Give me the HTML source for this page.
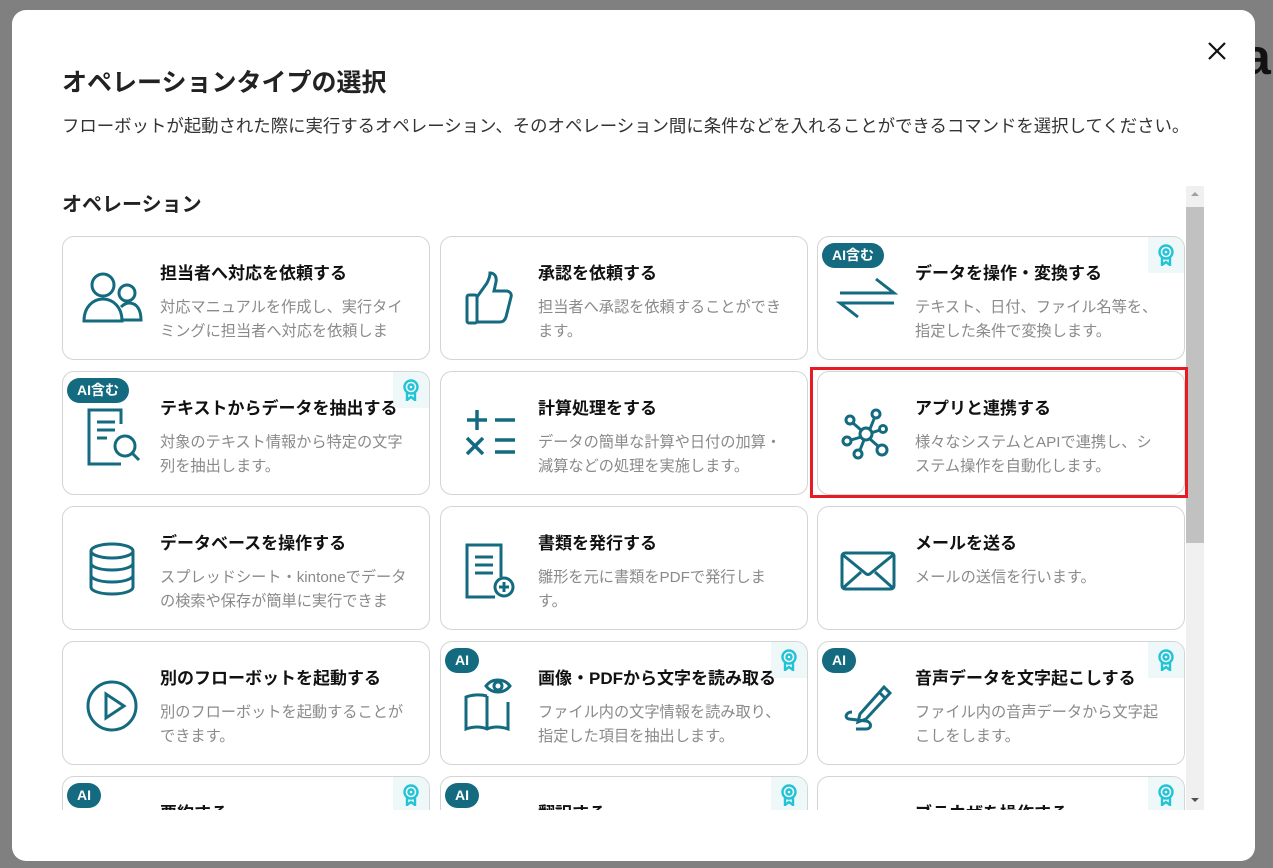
<!DOCTYPE html>
<html><head><meta charset="utf-8">
<style>
*{margin:0;padding:0;box-sizing:border-box}
body{width:1273px;height:868px;background:#808080;position:relative;overflow:hidden;font-family:"Liberation Sans","Noto Sans CJK JP",sans-serif}
.bgwrap{position:absolute;left:1255px;top:0;width:18px;height:868px;overflow:hidden}
.bgA{position:absolute;left:-12px;top:28px;font-size:50px;color:#111;font-weight:bold}
.modal{position:absolute;left:12px;top:10px;width:1243px;height:851px;background:#fff;border-radius:14px}
.x{position:absolute;left:1206px;top:40px}
h1{position:absolute;left:62px;top:63px;font-size:25px;font-weight:bold;color:#222}
.sub{position:absolute;left:62px;top:113px;font-size:17.4px;color:#333;white-space:nowrap}
h2{position:absolute;left:62px;top:188px;font-size:20px;font-weight:bold;color:#222}
.scroll{position:absolute;left:62px;top:186px;width:1143px;height:624px;overflow:hidden}
.sb{position:absolute;left:1186px;top:186px;width:18px;height:624px;background:#f0f0f0}
.thumb{position:absolute;left:1186px;top:207px;width:18px;height:336px;background:#c1c1c1}
.card{position:absolute;width:368px;height:124px;border:1px solid #d4d4d4;border-radius:12px;background:#fff;overflow:hidden}
.card .t{position:absolute;left:97px;top:22px;font-size:17px;font-weight:bold;color:#111;white-space:nowrap}
.card .d{position:absolute;left:97px;top:59px;width:250px;font-size:15.2px;line-height:24px;color:#8a8a8a;height:48px;overflow:hidden}
.card svg.ic{position:absolute;left:18px;top:32px}
.badge{position:absolute;left:4px;top:6px;height:25px;border-radius:13px;background:#146b80;color:#fff;font-size:14px;font-weight:bold;padding:0 10px;line-height:25px;white-space:nowrap}
.aw{position:absolute;right:0;top:0;width:36px;height:36px;background:#eef8f9;border-top-right-radius:12px}
.red{position:absolute;left:810px;top:367px;width:378px;height:131px;border:3px solid #e61b24}
</style></head><body>
<div class="bgwrap"><div class="bgA">a</div></div>
<div class="modal"></div>
<svg class="x" width="22" height="22" viewBox="0 0 22 22"><path d="M3 3L19 19M19 3L3 19" stroke="#111" stroke-width="2.2"/></svg>
<h1>オペレーションタイプの選択</h1>
<div class="sub">フローボットが起動された際に実行するオペレーション、そのオペレーション間に条件などを入れることができるコマンドを選択してください。</div>
<h2>オペレーション</h2>
<div class="sb"></div><div class="thumb"></div>
<svg style="position:absolute;left:1190px;top:190px" width="10" height="8"><path d="M1 6L5 2L9 6Z" fill="#a0a0a0"/></svg>
<svg style="position:absolute;left:1190px;top:796px" width="10" height="8"><path d="M1 2L5 6L9 2Z" fill="#505050"/></svg>

<div class="scroll">
<div class="card" style="left:0;top:50px"><svg class="ic" width="62" height="60" viewBox="0 0 62 60" fill="none" stroke="#146b80" stroke-width="3"><circle cx="22" cy="16" r="11"/><path d="M3 52c0-14 9-22 19-22s19 8 19 22z"/><circle cx="46" cy="24" r="8"/><path d="M40 38c3-3 5-4 8-4 8 0 12 7 12 17H42"/></svg><div class="t">担当者へ対応を依頼する</div><div class="d">対応マニュアルを作成し、実行タイミングに担当者へ対応を依頼しま</div></div>
<div class="card" style="left:378px;top:50px"><svg class="ic" width="62" height="60" viewBox="0 0 62 60" fill="none" stroke="#146b80" stroke-width="3"><rect x="8" y="26" width="10" height="28" rx="2"/><path d="M18 28l10-14c2-4 3-7 3-10 4 0 7 3 6 9l-2 9h12c4 0 6 3 5 6l-5 20c-1 3-3 5-6 5H18"/></svg><div class="t">承認を依頼する</div><div class="d">担当者へ承認を依頼することができます。</div></div>
<div class="card" style="left:755px;top:50px"><div class="badge">AI含む</div><div class="aw"></div><svg style="position:absolute;right:9px;top:7px" width="18" height="22" viewBox="0 0 18 22" fill="none" stroke="#22c3d6" stroke-width="2.4"><circle cx="9" cy="8" r="6.5"/><circle cx="9" cy="8" r="2.5"/><path d="M5 14v7l4-3 4 3v-7"/></svg><svg class="ic" width="62" height="60" viewBox="0 0 62 60" fill="none" stroke="#146b80" stroke-width="3"><path d="M4 24H58L40 10M58 34H4L22 48"/></svg><div class="t">データを操作・変換する</div><div class="d">テキスト、日付、ファイル名等を、指定した条件で変換します。</div></div>
<div class="card" style="left:0;top:185px"><div class="badge">AI含む</div><div class="aw"></div><svg style="position:absolute;right:9px;top:7px" width="18" height="22" viewBox="0 0 18 22" fill="none" stroke="#22c3d6" stroke-width="2.4"><circle cx="9" cy="8" r="6.5"/><circle cx="9" cy="8" r="2.5"/><path d="M5 14v7l4-3 4 3v-7"/></svg><svg class="ic" width="62" height="64" viewBox="0 0 62 64" fill="none" stroke="#146b80" stroke-width="3"><path d="M40 20V6H8v54h32"/><path d="M16 18h18M16 26h18M16 34h10"/><circle cx="44" cy="42" r="10"/><path d="M51 49l7 7"/></svg><div class="t">テキストからデータを抽出する</div><div class="d">対象のテキスト情報から特定の文字列を抽出します。</div></div>
<div class="card" style="left:378px;top:185px"><svg class="ic" width="62" height="60" viewBox="0 0 62 60" fill="none" stroke="#146b80" stroke-width="3.5"><path d="M8 16h20M18 6v20M36 16h20M8 34l16 16M24 34L8 50M36 36h20M36 48h20"/></svg><div class="t">計算処理をする</div><div class="d">データの簡単な計算や日付の加算・減算などの処理を実施します。</div></div>
<div class="card" style="left:755px;top:185px"><svg class="ic" width="62" height="60" viewBox="0 0 62 60" fill="none" stroke="#146b80" stroke-width="3"><circle cx="30" cy="30" r="6"/><path d="M34 25l4-10M25 26l-8-7M25 33l-10 3M34 35l9 8M35 29l9-3M28 36l-4 10"/><circle cx="40" cy="10" r="4"/><circle cx="14" cy="16" r="4"/><circle cx="11" cy="37" r="4"/><circle cx="46" cy="46" r="5"/><circle cx="47" cy="25" r="3.5"/><circle cx="22" cy="50" r="4"/></svg><div class="t">アプリと連携する</div><div class="d">様々なシステムとAPIで連携し、システム操作を自動化します。</div></div>
<div class="card" style="left:0;top:320px"><svg class="ic" width="62" height="60" viewBox="0 0 62 60" fill="none" stroke="#146b80" stroke-width="3"><ellipse cx="31" cy="12" rx="21" ry="7"/><path d="M10 12v36c0 4 9 7 21 7s21-3 21-7V12M10 24c0 4 9 7 21 7s21-3 21-7M10 36c0 4 9 7 21 7s21-3 21-7"/></svg><div class="t">データベースを操作する</div><div class="d">スプレッドシート・kintoneでデータの検索や保存が簡単に実行できま</div></div>
<div class="card" style="left:378px;top:320px"><svg class="ic" width="62" height="62" viewBox="0 0 62 62" fill="none" stroke="#146b80" stroke-width="3"><path d="M42 38V6H8v52h28"/><path d="M16 18h18M16 26h18M16 34h18"/><circle cx="45" cy="48" r="9"/><path d="M45 43v10M40 48h10"/></svg><div class="t">書類を発行する</div><div class="d">雛形を元に書類をPDFで発行します。</div></div>
<div class="card" style="left:755px;top:320px"><svg class="ic" width="62" height="60" viewBox="0 0 62 60" fill="none" stroke="#146b80" stroke-width="3"><rect x="6" y="14" width="52" height="36" rx="3"/><path d="M7 16l22 18c2 2 4 2 6 0l22-18M7 49l18-16M57 49L39 33"/></svg><div class="t">メールを送る</div><div class="d">メールの送信を行います。</div></div>
<div class="card" style="left:0;top:455px"><svg class="ic" width="62" height="60" viewBox="0 0 62 60" fill="none" stroke="#146b80" stroke-width="3"><circle cx="31" cy="32" r="24"/><path d="M25 20v24l18-12z"/></svg><div class="t">別のフローボットを起動する</div><div class="d">別のフローボットを起動することができます。</div></div>
<div class="card" style="left:378px;top:455px"><div class="badge">AI</div><div class="aw"></div><svg style="position:absolute;right:9px;top:7px" width="18" height="22" viewBox="0 0 18 22" fill="none" stroke="#22c3d6" stroke-width="2.4"><circle cx="9" cy="8" r="6.5"/><circle cx="9" cy="8" r="2.5"/><path d="M5 14v7l4-3 4 3v-7"/></svg><svg class="ic" width="62" height="60" viewBox="0 0 62 60" fill="none" stroke="#146b80" stroke-width="3"><path d="M28 22c-8-2-16-1-21 1v32c6-2 14-3 21 0 7-3 15-2 21 0V28"/><path d="M28 22v33"/><path d="M27 12c6-8 18-8 24 0-6 8-18 8-24 0z"/><circle cx="39" cy="12" r="4"/></svg><div class="t">画像・PDFから文字を読み取る</div><div class="d">ファイル内の文字情報を読み取り、指定した項目を抽出します。</div></div>
<div class="card" style="left:755px;top:455px"><div class="badge">AI</div><div class="aw"></div><svg style="position:absolute;right:9px;top:7px" width="18" height="22" viewBox="0 0 18 22" fill="none" stroke="#22c3d6" stroke-width="2.4"><circle cx="9" cy="8" r="6.5"/><circle cx="9" cy="8" r="2.5"/><path d="M5 14v7l4-3 4 3v-7"/></svg><svg class="ic" width="62" height="60" viewBox="0 0 62 60" fill="none" stroke="#146b80" stroke-width="3"><path d="M24 40l-2 8 8-3 24-26-6-6z"/><path d="M44 19l6 6"/><path d="M16 38c-6 0-8 6-3 7l17 2c6 1 6 8 0 8h-10"/></svg><div class="t">音声データを文字起こしする</div><div class="d">ファイル内の音声データから文字起こしをします。</div></div>
<div class="card" style="left:0;top:590px"><div class="badge">AI</div><div class="aw"></div><svg style="position:absolute;right:9px;top:7px" width="18" height="22" viewBox="0 0 18 22" fill="none" stroke="#22c3d6" stroke-width="2.4"><circle cx="9" cy="8" r="6.5"/><circle cx="9" cy="8" r="2.5"/><path d="M5 14v7l4-3 4 3v-7"/></svg><div class="t">要約する</div></div>
<div class="card" style="left:378px;top:590px"><div class="badge">AI</div><div class="aw"></div><svg style="position:absolute;right:9px;top:7px" width="18" height="22" viewBox="0 0 18 22" fill="none" stroke="#22c3d6" stroke-width="2.4"><circle cx="9" cy="8" r="6.5"/><circle cx="9" cy="8" r="2.5"/><path d="M5 14v7l4-3 4 3v-7"/></svg><div class="t">翻訳する</div></div>
<div class="card" style="left:755px;top:590px"><div class="aw"></div><svg style="position:absolute;right:9px;top:7px" width="18" height="22" viewBox="0 0 18 22" fill="none" stroke="#22c3d6" stroke-width="2.4"><circle cx="9" cy="8" r="6.5"/><circle cx="9" cy="8" r="2.5"/><path d="M5 14v7l4-3 4 3v-7"/></svg><div class="t">ブラウザを操作する</div></div>
</div>
<div class="red"></div>
</body></html>
